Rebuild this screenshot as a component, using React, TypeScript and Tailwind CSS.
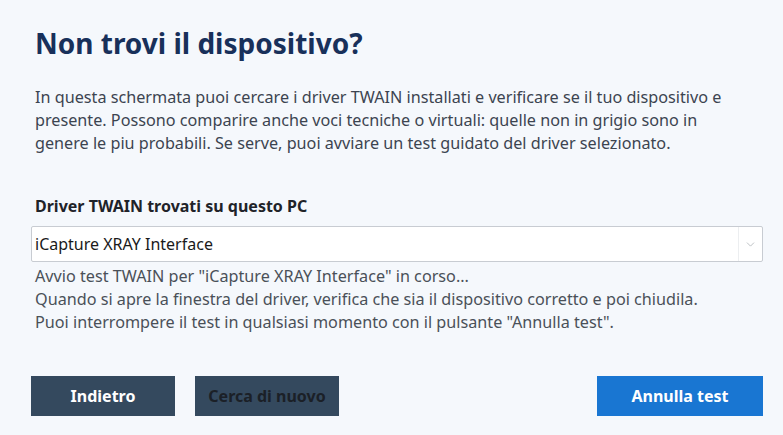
import { ChevronDown } from "lucide-react";

const font = { fontFamily: '"Noto Sans", "Open Sans", sans-serif' };

const App = () => {
  return (
    <div
      className="w-[783px] h-[435px] bg-[#f5f8fc] pl-[31px] pr-[20px] pt-[24px] flex flex-col"
      style={font}
    >
      <h1 className="pl-[4px] text-[28px] leading-[38px] font-bold text-[#18305a]">
        Non trovi il dispositivo?
      </h1>
      <p className="pl-[4px] mt-[24px] text-[16.2px] leading-[23px] text-[#3c4450] w-[715px]">
        In questa schermata puoi cercare i driver TWAIN installati e verificare se il tuo dispositivo e
        presente. Possono comparire anche voci tecniche o virtuali: quelle non in grigio sono in genere
        le piu probabili. Se serve, puoi avviare un test guidato del driver selezionato.
      </p>
      <label className="pl-[4px] mt-[40px] text-[16px] leading-[22px] font-bold text-[#1f2329]">
        Driver TWAIN trovati su questo PC
      </label>
      <div className="mt-[9px] w-[732px] h-[36px] bg-white border border-[#c8ccd2] rounded-[2px] flex items-center">
        <div className="flex-1 h-full border-r border-[#eceef0] flex items-center pl-[3px] text-[16px] text-[#1a1a1a]">
          iCapture XRAY Interface
        </div>
        <div className="w-[23px] flex items-center justify-center">
          <ChevronDown size={13} strokeWidth={1.2} color="#9aa0a6" />
        </div>
      </div>
      <div className="pl-[4px] mt-[3px] text-[16.2px] leading-[23px] text-[#4a5058]">
        <div>Avvio test TWAIN per "iCapture XRAY Interface" in corso...</div>
        <div>Quando si apre la finestra del driver, verifica che sia il dispositivo corretto e poi chiudila.</div>
        <div>Puoi interrompere il test in qualsiasi momento con il pulsante "Annulla test".</div>
      </div>
      <div className="mt-[42px] flex items-center">
        <button className="w-[144px] h-[40px] bg-[#34495e] text-white text-[16px] font-bold">
          Indietro
        </button>
        <button className="ml-[20px] w-[144px] h-[40px] bg-[#34495e] text-[#1b2027] text-[16px] font-bold">
          Cerca di nuovo
        </button>
        <button className="ml-auto w-[166px] h-[40px] bg-[#1976d2] text-white text-[16px] font-bold">
          Annulla test
        </button>
      </div>
    </div>
  );
};

export default App;
